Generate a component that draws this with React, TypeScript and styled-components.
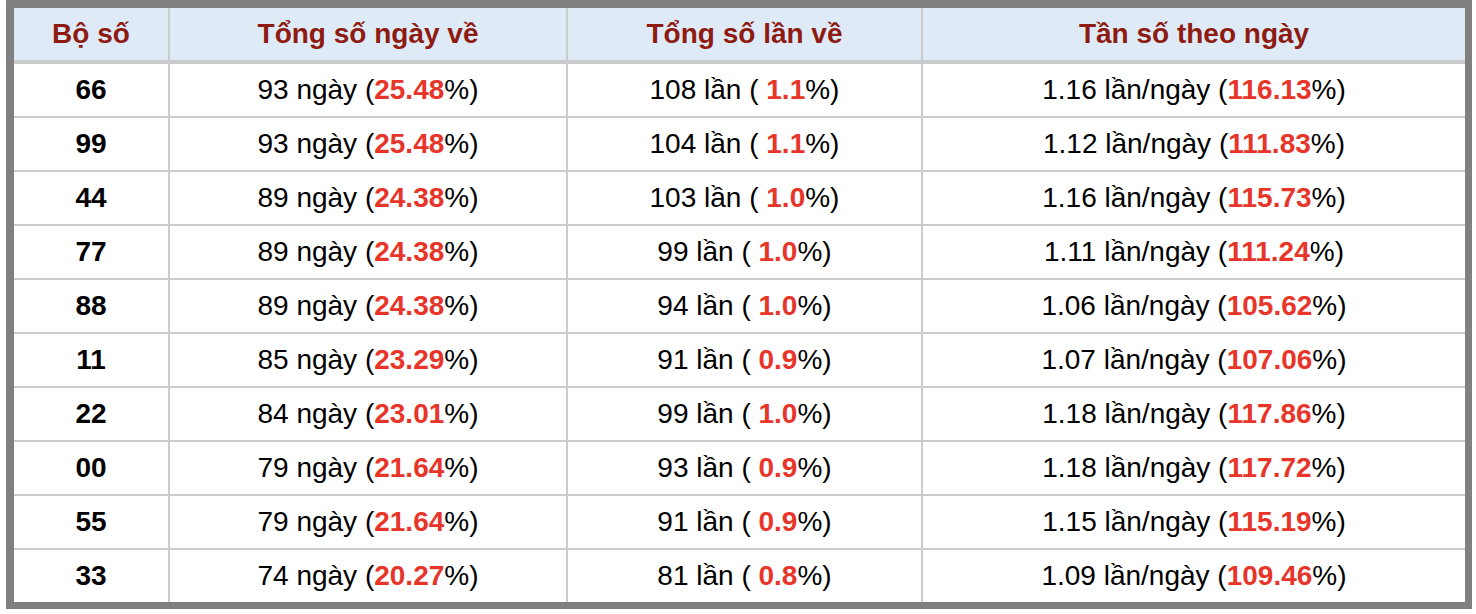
import React from "react";
import styled, { createGlobalStyle } from "styled-components";

const Global = createGlobalStyle`
  html, body { margin: 0; padding: 0; background: #ffffff; }
  body { font-family: "Liberation Sans", Arial, Helvetica, sans-serif; }
`;

const Frame = styled.div`
  margin: 0 4px 0 6px;
  width: 1466px;
  box-sizing: border-box;
  border-style: solid;
  border-color: #808080;
  border-width: 8px 7px 7px 8px;
  background: #ffffff;
`;

const Table = styled.table`
  border-collapse: separate;
  border-spacing: 0;
  width: 100%;
  table-layout: fixed;
  font-family: "Liberation Sans", Arial, Helvetica, sans-serif;
  font-size: 28px;
  line-height: 32px;
  color: #000000;
`;

const HeadCell = styled.th<{ $last?: boolean }>`
  height: 52px;
  padding: 0;
  box-sizing: content-box;
  background: #deebf7;
  color: #8e1b12;
  font-weight: bold;
  text-align: center;
  vertical-align: middle;
  border-bottom: 4px solid #cbcbcb;
  border-right: ${(p) => (p.$last ? "none" : "2px solid #cbcbcb")};
`;

const Cell = styled.td<{ $last?: boolean; $bottom?: boolean; $bold?: boolean }>`
  height: 52px;
  padding: 0;
  box-sizing: content-box;
  text-align: center;
  vertical-align: middle;
  white-space: nowrap;
  font-weight: ${(p) => (p.$bold ? "bold" : "normal")};
  border-right: ${(p) => (p.$last ? "none" : "2px solid #cbcbcb")};
  border-bottom: ${(p) => (p.$bottom ? "none" : "2px solid #cbcbcb")};
`;

const Hot = styled.span`
  color: #e8352a;
  font-weight: bold;
`;

type Row = {
  bo: string;
  ngay: number;
  ngayPct: string;
  lan: number;
  lanPct: string;
  freq: string;
  freqPct: string;
};

const rows: Row[] = [
  { bo: "66", ngay: 93, ngayPct: "25.48", lan: 108, lanPct: "1.1", freq: "1.16", freqPct: "116.13" },
  { bo: "99", ngay: 93, ngayPct: "25.48", lan: 104, lanPct: "1.1", freq: "1.12", freqPct: "111.83" },
  { bo: "44", ngay: 89, ngayPct: "24.38", lan: 103, lanPct: "1.0", freq: "1.16", freqPct: "115.73" },
  { bo: "77", ngay: 89, ngayPct: "24.38", lan: 99, lanPct: "1.0", freq: "1.11", freqPct: "111.24" },
  { bo: "88", ngay: 89, ngayPct: "24.38", lan: 94, lanPct: "1.0", freq: "1.06", freqPct: "105.62" },
  { bo: "11", ngay: 85, ngayPct: "23.29", lan: 91, lanPct: "0.9", freq: "1.07", freqPct: "107.06" },
  { bo: "22", ngay: 84, ngayPct: "23.01", lan: 99, lanPct: "1.0", freq: "1.18", freqPct: "117.86" },
  { bo: "00", ngay: 79, ngayPct: "21.64", lan: 93, lanPct: "0.9", freq: "1.18", freqPct: "117.72" },
  { bo: "55", ngay: 79, ngayPct: "21.64", lan: 91, lanPct: "0.9", freq: "1.15", freqPct: "115.19" },
  { bo: "33", ngay: 74, ngayPct: "20.27", lan: 81, lanPct: "0.8", freq: "1.09", freqPct: "109.46" },
];

export default function App() {
  return (
    <>
      <Global />
      <Frame>
        <Table>
          <colgroup>
            <col style={{ width: 156 }} />
            <col style={{ width: 398 }} />
            <col style={{ width: 355 }} />
            <col style={{ width: 542 }} />
          </colgroup>
          <thead>
            <tr>
              <HeadCell>Bộ số</HeadCell>
              <HeadCell>Tổng số ngày về</HeadCell>
              <HeadCell>Tổng số lần về</HeadCell>
              <HeadCell $last>Tần số theo ngày</HeadCell>
            </tr>
          </thead>
          <tbody>
            {rows.map((r, i) => {
              const bottom = i === rows.length - 1;
              return (
                <tr key={r.bo}>
                  <Cell $bold $bottom={bottom}>{r.bo}</Cell>
                  <Cell $bottom={bottom}>
                    {r.ngay} ngày (<Hot>{r.ngayPct}</Hot>%)
                  </Cell>
                  <Cell $bottom={bottom}>
                    {r.lan} lần ( <Hot>{r.lanPct}</Hot>%)
                  </Cell>
                  <Cell $last $bottom={bottom}>
                    {r.freq} lần/ngày (<Hot>{r.freqPct}</Hot>%)
                  </Cell>
                </tr>
              );
            })}
          </tbody>
        </Table>
      </Frame>
    </>
  );
}
